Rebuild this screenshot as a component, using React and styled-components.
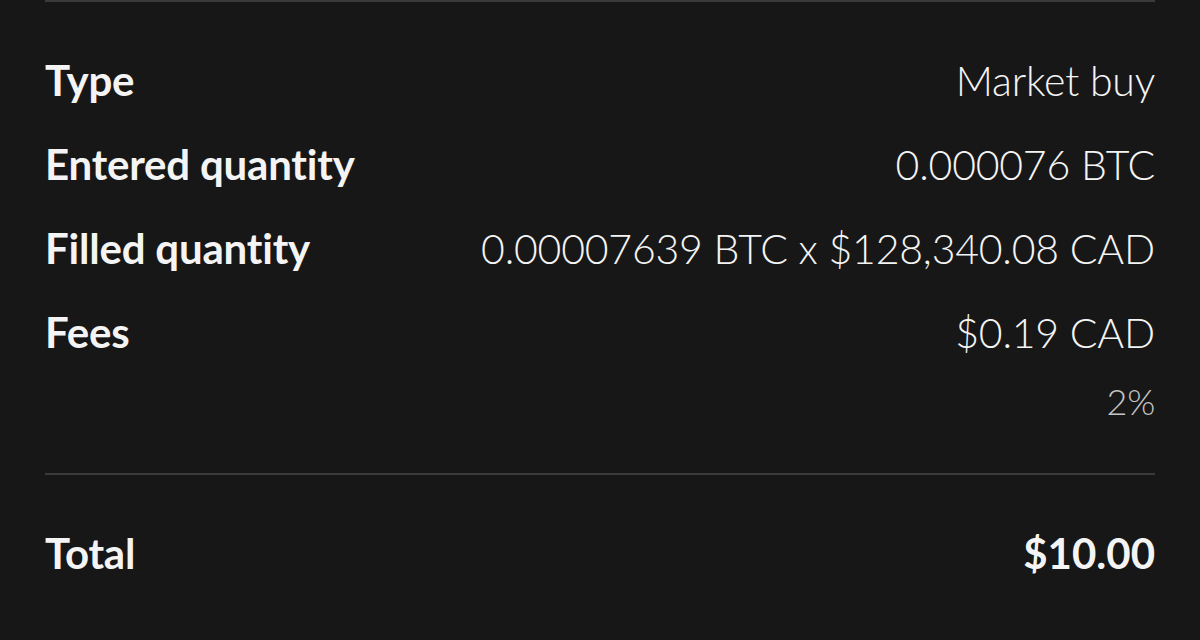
import React from "react";
import styled, { createGlobalStyle } from "styled-components";

const Global = createGlobalStyle`
  html, body { margin: 0; padding: 0; background: #171717; }
  body { font-family: Lato, "Noto Sans", sans-serif; color: #f4f4f4; }
`;

const Page = styled.div`
  width: 1200px;
  height: 640px;
  box-sizing: border-box;
  padding: 0 45px;
  background: #171717;
  overflow: hidden;
`;

const Divider = styled.div`
  height: 2px;
  background: #3a3a3a;
  margin-top: ${(p) => p.$top || 0}px;
`;

const List = styled.div`
  display: flex;
  flex-direction: column;
  padding-top: ${(p) => p.$padTop || 0}px;
`;

const Row = styled.div`
  display: flex;
  justify-content: space-between;
  align-items: center;
  height: ${(p) => p.$h || 84}px;
`;

const Label = styled.span`
  font-size: 42px;
  font-weight: 700;
  line-height: 1;
  letter-spacing: -0.2px;
  color: #f4f4f4;
`;

const Value = styled.span`
  font-size: ${(p) => (p.$small ? 36 : p.$bold ? 42 : 41)}px;
  font-weight: ${(p) => (p.$bold ? 700 : 300)};
  line-height: 1;
  letter-spacing: ${(p) => (p.$bold ? "0" : "-0.2px")};
  color: ${(p) => (p.$muted ? "#c6c6c6" : "#f4f4f4")};
  margin-left: auto;
`;

const rows = [
  ["Type", "Market buy"],
  ["Entered quantity", "0.000076 BTC"],
  ["Filled quantity", "0.00007639 BTC x $128,340.08 CAD"],
  ["Fees", "$0.19 CAD"],
];

export default function App() {
  return (
    <Page>
      <Global />
      <Divider />
      <List $padTop={36}>
        {rows.map(([l, v]) => (
          <Row key={l}>
            <Label>{l}</Label>
            <Value>{v}</Value>
          </Row>
        ))}
        <Row $h={54}>
          <Value $muted $small>2%</Value>
        </Row>
      </List>
      <Divider $top={45} />
      <List $padTop={36}>
        <Row $h={84}>
          <Label>Total</Label>
          <Value $bold>$10.00</Value>
        </Row>
      </List>
    </Page>
  );
}
